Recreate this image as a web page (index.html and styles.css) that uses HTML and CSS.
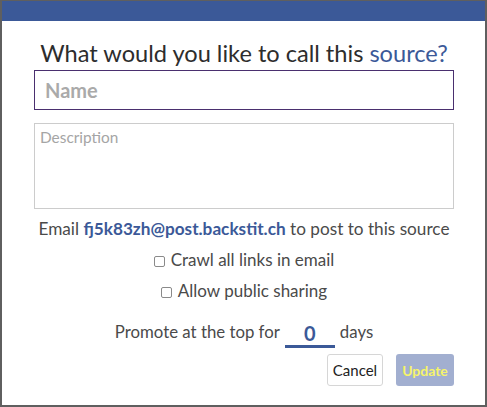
FILE: index.html
```html
<!DOCTYPE html>
<html>
<head>
<meta charset="utf-8">
<link rel="stylesheet" href="styles.css">
</head>
<body>
<div class="modal">
  <div class="header"></div>
  <div class="body">
    <h1 class="title">What would you like to call this <span class="accent">source?</span></h1>
    <input class="name" type="text" placeholder="Name">
    <textarea class="desc" placeholder="Description"></textarea>
    <p class="email">Email <strong>fj5k83zh@post.backstit.ch</strong> to post to this source</p>
    <label class="check check-crawl"><input type="checkbox" class="box"><span>Crawl all links in email</span></label>
    <label class="check check-share"><input type="checkbox" class="box"><span>Allow public sharing</span></label>
    <div class="promote"><span>Promote at the top for</span><input class="days" type="text" value="0"><span>days</span></div>
    <div class="actions">
      <button class="btn cancel">Cancel</button>
      <button class="btn update">Update</button>
    </div>
  </div>
</div>
</body>
</html>
```

FILE: styles.css
```css
* { box-sizing: border-box; }
html, body { margin: 0; padding: 0; }
body {
  width: 487px;
  height: 407px;
  background: #5f5f5f;
  font-family: Lato, "Open Sans", sans-serif;
  overflow: hidden;
}
.modal {
  margin: 1px 2px 0 2px;
  height: 404px;
  background: #fff;
  display: flex;
  flex-direction: column;
}
.header {
  height: 20px;
  background: #3b5998;
  flex: none;
}
.body {
  padding: 0 31px 0 32px;
  display: flex;
  flex-direction: column;
}
.title {
  margin: 17px 0 0;
  font-size: 23.6px;
  font-weight: 400;
  line-height: 30px;
  color: #2d2d2d;
  text-align: center;
  white-space: nowrap;
}
.accent { color: #3b5998; }
.name {
  margin-top: 2px;
  height: 40px;
  width: 100%;
  border: 1px solid #4a2f6f;
  border-radius: 0;
  padding: 0 10px;
  font-family: inherit;
  font-size: 20px;
  font-weight: 700;
  outline: none;
}
.name::placeholder { color: #aaa; font-weight: 700; }
.desc {
  margin-top: 13px;
  height: 86px;
  width: 100%;
  border: 1px solid #ccc;
  border-radius: 0;
  padding: 4px 5px;
  font-family: inherit;
  font-size: 15.4px;
  resize: none;
  outline: none;
}
.desc::placeholder { color: #a5a5a5; }
.email {
  margin: 10px 0 0;
  font-size: 17.2px;
  line-height: 20px;
  color: #4a4a4a;
  text-align: center;
  white-space: nowrap;
}
.email strong { color: #3b5998; font-weight: 700; }
.check {
  display: flex;
  align-items: center;
  justify-content: center;
  gap: 6px;
  font-size: 17px;
  line-height: 20px;
  color: #4a4a4a;
}
.check-crawl { margin-top: 11px; }
.check-share { margin-top: 11px; }
.box {
  appearance: none;
  -webkit-appearance: none;
  width: 11px;
  height: 11px;
  margin: 2px 0 0;
  border: 1px solid #8a8a8a;
  border-radius: 2px;
  background: #fff;
}
.promote {
  margin-top: 14px;
  display: flex;
  align-items: center;
  justify-content: center;
  font-size: 16.8px;
  line-height: 20px;
  color: #4a4a4a;
}
.days {
  width: 50px;
  height: 26px;
  margin: 7px 5px 0;
  border: none;
  border-bottom: 3px solid #3b5998;
  text-align: center;
  font-family: inherit;
  font-size: 20px;
  font-weight: 700;
  color: #3b5998;
  padding: 0 0 2px;
  outline: none;
}
.actions {
  margin-top: 6px;
  display: flex;
  justify-content: flex-end;
  gap: 13px;
}
.btn {
  height: 32px;
  border-radius: 3px;
  font-family: inherit;
  padding: 0;
}
.cancel {
  width: 56px;
  background: #fff;
  border: 1px solid #d6d6d6;
  color: #222;
  font-size: 15px;
}
.update {
  width: 58px;
  background: #a2afd0;
  border: none;
  color: #f6f46a;
  font-weight: 700;
  font-size: 14px;
}
```
